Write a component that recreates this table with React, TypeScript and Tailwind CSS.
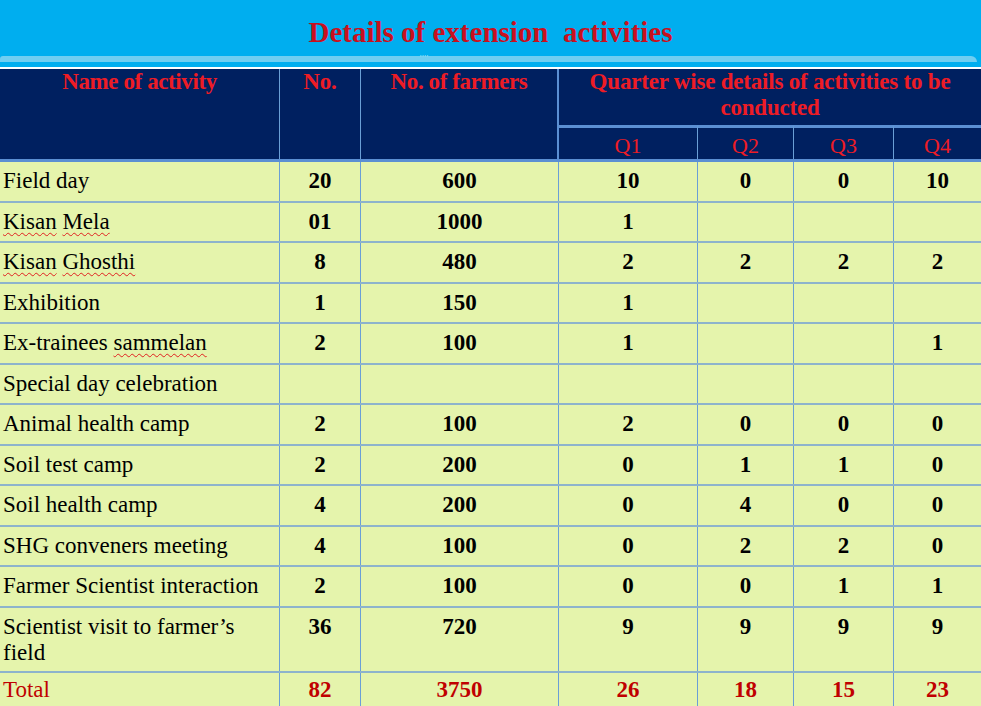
import React from "react";

const cols = "grid grid-cols-[280px_81px_198px_139px_96px_100px_87px]";

type Row = { name: React.ReactNode; v: string[]; h?: string };

const W = ({ children }: { children: React.ReactNode }) => (
  <span className="underline decoration-wavy decoration-[#e02020] decoration-1 underline-offset-[3px]">{children}</span>
);

const rows: Row[] = [
  { name: "Field day", v: ["20", "600", "10", "0", "0", "10"] },
  { name: <><W>Kisan</W> <W>Mela</W></>, v: ["01", "1000", "1", "", "", ""] },
  { name: <><W>Kisan</W> <W>Ghosthi</W></>, v: ["8", "480", "2", "2", "2", "2"] },
  { name: "Exhibition", v: ["1", "150", "1", "", "", ""] },
  { name: <>Ex-trainees <W>sammelan</W></>, v: ["2", "100", "1", "", "", "1"] },
  { name: "Special day celebration", v: ["", "", "", "", "", ""] },
  { name: "Animal health camp", v: ["2", "100", "2", "0", "0", "0"] },
  { name: "Soil test camp", v: ["2", "200", "0", "1", "1", "0"] },
  { name: "Soil health camp", v: ["4", "200", "0", "4", "0", "0"] },
  { name: "SHG conveners meeting", v: ["4", "100", "0", "2", "2", "0"] },
  { name: <span className="whitespace-nowrap">Farmer Scientist interaction</span>, v: ["2", "100", "0", "0", "1", "1"] },
  { name: <>Scientist visit to farmer{"\u2019"}s<br />field</>, v: ["36", "720", "9", "9", "9", "9"], h: "h-[65px]" },
];

export default function App() {
  return (
    <div className="w-[981px] h-[706px] overflow-hidden bg-[#00aeef] font-['Liberation_Serif','Times_New_Roman',serif]">
      <div className="h-[56px] flex justify-center pt-[15px]">
        <h1 className="text-[29px] leading-[34px] font-bold text-[#c8101e] whitespace-pre">
          {"Details of extension  activities"}
        </h1>
      </div>
      <div className="relative h-[6px] bg-[#70cef1] rounded-tl-[6px] rounded-tr-[12px] mr-[4px]">
        <span className="absolute left-[420px] top-[-3px] text-[7px] leading-[8px] text-[#d0eefa] tracking-[1px]">''''</span>
      </div>
      <div className="h-[5px]" />
      <div className="h-[2px] bg-white" />

      {/* header */}
      <div className="bg-[#002060] text-[#ee1c25] grid grid-cols-[280px_81px_198px_139px_96px_100px_87px] grid-rows-[56px_34px] border-b-[3px] border-[#5b8fd3]">
        <div className="row-span-2 border-r border-[#6a9fd6] text-center font-bold text-[23px] leading-[26px] tracking-[-0.4px]">Name of activity</div>
        <div className="row-span-2 border-r border-[#6a9fd6] text-center font-bold text-[23px] leading-[26px] tracking-[-0.2px]">No.</div>
        <div className="row-span-2 border-r-[2px] border-[#5b8fd3] text-center font-bold text-[23px] leading-[26px] tracking-[-0.4px]">No. of farmers</div>
        <div className="col-span-4 text-center font-bold text-[23px] leading-[26px] px-[20px] tracking-[-0.2px]">
          Quarter wise details of activities to be conducted
        </div>
        <div className="border-t-[3px] border-l-[2px] border-r border-[#5b8fd3] border-r-[#6a9fd6] flex items-center justify-center pt-[4px] text-[22px] leading-[26px] ml-[-2px]">Q1</div>
        <div className="border-t-[3px] border-r border-[#5b8fd3] border-r-[#6a9fd6] flex items-center justify-center pt-[4px] text-[22px] leading-[26px]">Q2</div>
        <div className="border-t-[3px] border-r border-[#5b8fd3] border-r-[#6a9fd6] flex items-center justify-center pt-[4px] text-[22px] leading-[26px]">Q3</div>
        <div className="border-t-[3px] border-[#5b8fd3] flex items-center justify-center pt-[4px] text-[22px] leading-[26px]">Q4</div>
      </div>

      {/* body */}
      <div className="bg-[#e5f4ac] text-black">
        {rows.map((r, i) => (
          <div key={i} className={`${cols} ${r.h ?? "h-[40.5px]"} border-b-2 border-[#8db3cc]`}>
            <div className="border-r border-[#6a9fd6] pl-[3px] pt-[6px] text-[23px] leading-[26px]">{r.name}</div>
            {r.v.map((x, j) => (
              <div key={j} className={`${j < 5 ? "border-r border-[#6a9fd6]" : ""} text-center font-bold text-[23px] leading-[26px] pt-[6px]`}>{x}</div>
            ))}
          </div>
        ))}
        <div className={`${cols} h-[40px] text-[#c00000]`}>
          <div className="border-r border-[#6a9fd6] pl-[3px] pt-[4px] text-[23px] leading-[26px]">Total</div>
          {["82", "3750", "26", "18", "15", "23"].map((x, j) => (
            <div key={j} className={`${j < 5 ? "border-r border-[#6a9fd6]" : ""} text-center font-bold text-[23px] leading-[26px] pt-[4px]`}>{x}</div>
          ))}
        </div>
      </div>
    </div>
  );
}
